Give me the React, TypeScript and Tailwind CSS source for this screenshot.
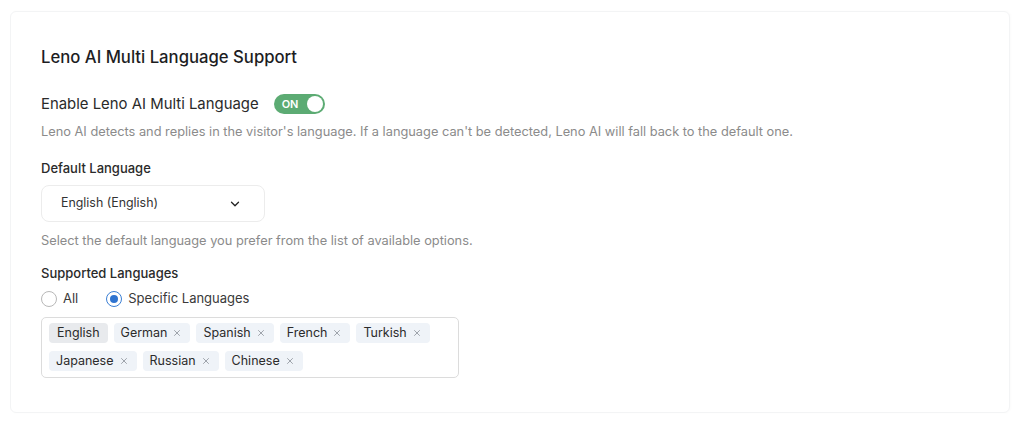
import { ChevronDown, X } from "lucide-react";

const languages = ["English", "German", "Spanish", "French", "Turkish", "Japanese", "Russian", "Chinese"];

function Toggle() {
  return (
    <div className="flex h-[20px] w-[51px] items-center justify-between rounded-full bg-[#5cab73] pl-[8px] pr-[2px]">
      <span className="text-[11px] font-semibold text-white">ON</span>
      <span className="size-[16px] rounded-full bg-white" />
    </div>
  );
}

function Radio({ checked, label }: { checked?: boolean; label: string }) {
  return (
    <label className="flex items-center gap-[6px]">
      {checked ? (
        <span className="flex size-[16px] items-center justify-center rounded-full border border-[#3b7fd4]">
          <span className="size-[8px] rounded-full bg-[#2f74d0]" />
        </span>
      ) : (
        <span className="size-[16px] rounded-full border border-[#b8b8b8]" />
      )}
      <span className="text-[13px] text-[#3a3a3a]">{label}</span>
    </label>
  );
}

function Tag({ name, fixed }: { name: string; fixed?: boolean }) {
  if (fixed) {
    return (
      <span className="flex h-[20px] items-center rounded-[4px] bg-[#e8eaed] px-[8px] text-[12.5px] text-[#2b2b2b]">
        {name}
      </span>
    );
  }
  return (
    <span className="flex h-[20px] items-center gap-[5px] rounded-[4px] bg-[#eff3f8] pl-[7px] pr-[8px] text-[12.5px] text-[#2b2b2b]">
      {name}
      <X className="size-[10px] text-[#7d838b]" strokeWidth={1.7} />
    </span>
  );
}

export default function App() {
  return (
    <div className="min-h-[421px] bg-white pl-[10px] pr-[14px] pt-[11px] pb-[8px]" style={{ fontFamily: "Inter, 'Noto Sans', sans-serif" }}>
      <div className="h-[402px] rounded-[6px] border border-[#f3f4f5] px-[30px] pt-[33px] shadow-[1px_0_3px_rgba(0,0,0,0.02)]">
        <h2 className="text-[16.7px] leading-[24px] font-medium text-[#1d1d1f]">Leno AI Multi Language Support</h2>

        <div className="mt-[23px] flex h-[24px] items-center gap-[15px]">
          <span className="text-[14.9px] text-[#2a2a2a]">Enable Leno AI Multi Language</span>
          <Toggle />
        </div>
        <p className="mt-[6px] text-[12.8px] leading-[20px] text-[#8b8b8b]">
          Leno AI detects and replies in the visitor's language. If a language can't be detected, Leno AI will fall back to the default one.
        </p>

        <div className="mt-[16px] text-[13px] leading-[20px] font-medium text-[#2a2a2a]">Default Language</div>
        <div className="mt-[7px] flex h-[37px] w-[224px] items-center justify-between rounded-[8px] border border-[#ececec] pl-[19px] pr-[22px]">
          <span className="text-[12.4px] text-[#333]">English (English)</span>
          <ChevronDown className="size-[14px] text-[#222]" strokeWidth={2.2} />
        </div>
        <p className="mt-[9px] text-[12.8px] leading-[20px] text-[#8b8b8b]">
          Select the default language you prefer from the list of available options.
        </p>

        <div className="mt-[12px] text-[13px] leading-[20px] font-medium text-[#2a2a2a]">Supported Languages</div>
        <div className="mt-[6px] flex h-[20px] items-center gap-[28px]">
          <Radio label="All" />
          <Radio checked label="Specific Languages" />
        </div>

        <div className="mt-[8px] flex w-[418px] flex-wrap gap-x-[6px] gap-y-[8px] rounded-[5px] border border-[#dcdcdc] px-[7px] pt-[5px] pb-[6px]">
          {languages.map((l, i) => (
            <Tag key={l} name={l} fixed={i === 0} />
          ))}
        </div>
      </div>
    </div>
  );
}
